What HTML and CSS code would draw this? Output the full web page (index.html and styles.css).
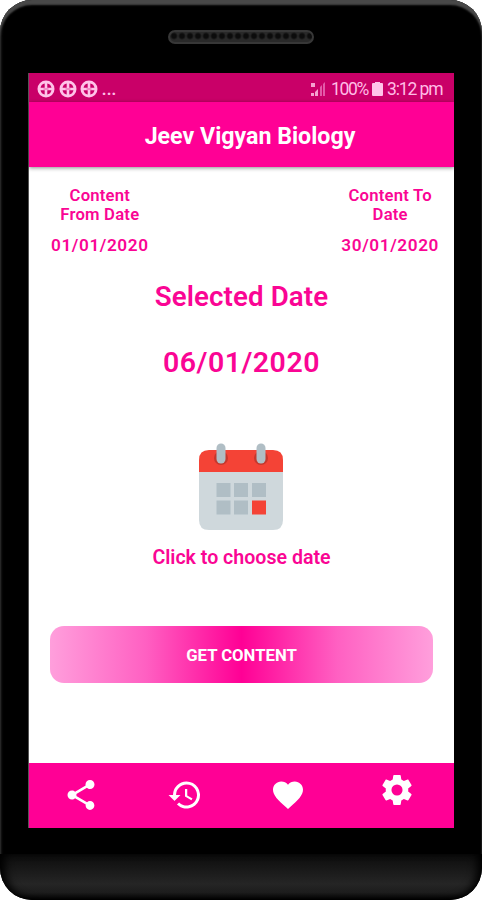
FILE: index.html
```html
<!DOCTYPE html>
<html lang="en">
<head>
    <meta charset="UTF-8">
    <meta name="viewport" content="width=device-width, initial-scale=1.0">
    <title>Jeev Vigyan Biology</title>
    <link rel="stylesheet" href="styles.css">
</head>
<body>

    <div class="phone">
        <div class="phone-top">
            <div class="speaker"></div>
        </div>

        <div class="screen">
            <div class="status-bar">
                <div class="notifications">
                    <svg class="ball" viewBox="0 0 18 18"><use href="#ball"/></svg>
                    <svg class="ball" viewBox="0 0 18 18"><use href="#ball"/></svg>
                    <svg class="ball" viewBox="0 0 18 18"><use href="#ball"/></svg>
                    <span class="dots">...</span>
                </div>
                <div class="status">
                    <svg class="signal" viewBox="0 0 15 15">
                        <path d="M0 1h4v4H0zM0 11h3v3H0zM4 10l3-3v7H4z" fill="#f5a3d1"/>
                        <path d="M9 5l2-2v11H9zM12 2l2-2v14h-2z" fill="#e35aa8"/>
                    </svg>
                    <span class="percent">100%</span>
                    <svg class="battery" viewBox="0 0 11 15"><path d="M3 0h5v1h2q1 0 1 1v11q0 1-1 1H1q-1 0-1-1V2q0-1 1-1h2z" fill="#ffc4e9"/></svg>
                    <span class="time">3:12 pm</span>
                </div>
            </div>

            <header class="app-bar">
                <h1>Jeev Vigyan Biology</h1>
            </header>

            <main class="content">
                <div class="range">
                    <div class="range-item">
                        <div class="label">Content<br>From Date</div>
                        <div class="value">01/01/2020</div>
                    </div>
                    <div class="range-item">
                        <div class="label">Content To<br>Date</div>
                        <div class="value">30/01/2020</div>
                    </div>
                </div>

                <h2 class="selected-title">Selected Date</h2>
                <div class="selected-date">06/01/2020</div>

                <svg class="calendar" viewBox="0 0 86 88">
                    <path d="M1 26h84v51q0 10-10 10H11Q1 87 1 77z" fill="#cfd8dc"/>
                    <path d="M1 29V17Q1 7 11 7h64q10 0 10 10v12z" fill="#f44336"/>
                    <circle cx="23" cy="15" r="7" fill="#c4382e"/>
                    <circle cx="63" cy="15" r="7" fill="#c4382e"/>
                    <rect x="18.5" y="0.5" width="9" height="20" rx="4.5" fill="#b0bec5"/>
                    <rect x="58.5" y="0.5" width="9" height="20" rx="4.5" fill="#b0bec5"/>
                    <path d="M18.500 40h14v14h-14zM36 40h14v14H36zM54 40h14v14H54zM18.500 57.500h14v14h-14zM36 57.500h14v14H36z" fill="#b0bec5"/>
                    <path d="M54 57.500h14v14H54z" fill="#f44336"/>
                </svg>
                <div class="choose">Click to choose date</div>

                <button class="get-content">GET CONTENT</button>
            </main>

            <nav class="bottom-nav">
                <a class="nav-item"><svg viewBox="0 0 24 24"><path d="M18 16.080c-.76 0-1.440.3-1.960.77L8.910 12.700c.05-.23.09-.46.09-.7s-.04-.47-.09-.7l7.050-4.110c.54.5 1.250.81 2.040.81 1.660 0 3-1.340 3-3s-1.340-3-3-3-3 1.340-3 3c0 .24.04.47.09.7L8.040 9.810C7.500 9.310 6.790 9 6 9c-1.660 0-3 1.340-3 3s1.340 3 3 3c.79 0 1.500-.31 2.040-.81l7.120 4.160c-.05.21-.08.43-.08.65 0 1.610 1.310 2.920 2.920 2.920s2.920-1.310 2.920-2.920-1.310-2.920-2.920-2.920z"/></svg></a>
                <a class="nav-item"><svg viewBox="0 0 24 24"><path d="M13 3a9 9 0 0 0-9 9H1l3.890 3.890.07.14L9 12H6a7 7 0 1 1 2.060 4.940l-1.420 1.420A9 9 0 1 0 13 3zm-1 5v5l4.280 2.540.72-1.210-3.500-2.080V8z"/></svg></a>
                <a class="nav-item"><svg viewBox="0 0 24 24"><path d="M12 21.350l-1.450-1.320C5.400 15.360 2 12.280 2 8.500 2 5.420 4.420 3 7.500 3c1.740 0 3.410.81 4.500 2.090C13.090 3.810 14.760 3 16.500 3 19.580 3 22 5.420 22 8.500c0 3.780-3.400 6.860-8.550 11.540z"/></svg></a>
                <a class="nav-item settings"><svg viewBox="0 0 24 24"><path d="M19.430 12.980c.04-.32.07-.64.07-.98s-.03-.66-.07-.98l2.110-1.650c.19-.15.24-.42.12-.64l-2-3.460c-.12-.22-.39-.3-.61-.22l-2.490 1c-.52-.4-1.080-.73-1.690-.98l-.38-2.650A.49.49 0 0 0 14 2h-4c-.25 0-.46.18-.49.42l-.38 2.650c-.61.25-1.170.59-1.690.98l-2.490-1c-.23-.09-.49 0-.61.22l-2 3.460c-.13.22-.07.49.12.64l2.110 1.650c-.04.32-.07.65-.07.98s.03.66.07.98l-2.110 1.650c-.19.15-.24.42-.12.64l2 3.460c.12.22.39.3.61.22l2.490-1c.52.4 1.080.73 1.690.98l.38 2.650c.03.24.24.42.49.42h4c.25 0 .46-.18.49-.42l.38-2.650c.61-.25 1.170-.59 1.690-.98l2.490 1c.23.09.49 0 .61-.22l2-3.460c.12-.22.07-.49-.12-.64zM12 15.700a3.700 3.700 0 1 1 0-7.400 3.700 3.700 0 0 1 0 7.400z"/></svg></a>
            </nav>
        </div>

        <div class="phone-bottom"></div>
    </div>

    <svg class="defs">
        <symbol id="ball" viewBox="0 0 18 18">
            <circle cx="9" cy="9" r="8.500" fill="#ffc4e9"/>
            <path d="M4.500 7q.5-2 2.500-2.500v2.500zM13.500 7q-.5-2-2.500-2.500v2.500zM4.500 11q.5 2 2.500 2.500v-2.500zM13.500 11q-.5 2-2.500 2.500v-2.500z" fill="#c90068" stroke="#c90068" stroke-width="1.400"/>
            <path d="M6.500 9h5" stroke="#e35aa8" stroke-width="1"/>
        </symbol>
    </svg>

</body>
</html>
```
FILE: styles.css
```css
* {
    box-sizing: border-box;
}

body {
    margin: 0;
    background: #ffffff;
    font-family: Roboto, 'Liberation Sans', sans-serif;
    color: #fa0594;
    overflow: hidden;
}

.defs {
    display: none;
}

svg {
    display: block;
    flex: none;
}

.phone {
    width: 482px;
    height: 900px;
    display: flex;
    flex-direction: column;
    background: #000000;
    border-radius: 32px;
    overflow: hidden;
    box-shadow: inset 0 5px 2px #484848, inset 1px 2px 3px #2a2a2a;
}

.phone-top {
    height: 73px;
    padding-top: 30px;
    flex: none;
}

.speaker {
    width: 146px;
    height: 14px;
    margin: 0 auto;
    border: 2px solid #373737;
    border-radius: 7px;
    background: radial-gradient(circle at 4px 4px, #0c0c0c 2px, #292929 4px) 0 0 / 8px 10px;
}

.screen {
    width: 426px;
    height: 755px;
    margin-left: 28px;
    border-left: 1px solid #555555;
    display: flex;
    flex-direction: column;
    flex: none;
    background: #ffffff;
}

.status-bar {
    height: 29px;
    padding: 3px 11px 0 8px;
    display: flex;
    justify-content: space-between;
    align-items: center;
    background: #c90068;
    color: #ffbde5;
    flex: none;
}

.notifications, .status {
    display: flex;
    align-items: center;
}

.ball {
    width: 18px;
    height: 18px;
    margin-right: 3.5px;
}

.dots {
    font-size: 19px;
    line-height: 20px;
    font-weight: 500;
    letter-spacing: -0.4px;
}

.signal {
    width: 15px;
    height: 15px;
    margin-right: 5px;
}

.percent, .time {
    font-size: 17.5px;
    line-height: 24px;
    white-space: nowrap;
}

.percent {
    width: 38px;
    letter-spacing: -1.3px;
}

.time {
    width: 56px;
    letter-spacing: -1.1px;
}

.battery {
    width: 11px;
    height: 15px;
    margin: 0 4px 0 3px;
}

.app-bar {
    height: 65px;
    display: flex;
    align-items: center;
    justify-content: center;
    padding: 3px 0 0 17px;
    background: #ff0095;
    box-shadow: 0 1px 4px rgba(0, 0, 0, 0.45);
    flex: none;
}

.app-bar h1 {
    margin: 0;
    font-size: 23.2px;
    font-weight: 700;
    color: #ffffff;
}

.content {
    flex: 1;
    display: flex;
    flex-direction: column;
    align-items: center;
}

.range {
    width: 100%;
    padding: 19px 15px 0 22px;
    display: flex;
    justify-content: space-between;
}

.range-item {
    text-align: center;
    font-weight: 600;
}

.label {
    font-size: 16.7px;
    line-height: 19px;
    letter-spacing: 0.2px;
}

.value {
    margin-top: 11px;
    font-size: 17.2px;
    line-height: 20px;
    letter-spacing: 0.6px;
}

.selected-title {
    margin: 26px 0 0;
    font-size: 27.7px;
    line-height: 32px;
    font-weight: 600;
    letter-spacing: 0.1px;
}

.selected-date {
    margin-top: 33px;
    font-size: 28.5px;
    line-height: 34px;
    font-weight: 600;
    letter-spacing: 0.5px;
}

.calendar {
    width: 86px;
    height: 88px;
    margin-top: 63px;
    margin-right: 1px;
}

.choose {
    margin-top: 15px;
    font-size: 19.6px;
    line-height: 24px;
    font-weight: 600;
}

.get-content {
    width: 383px;
    height: 57px;
    margin-top: 56px;
    padding: 2px 0 0;
    border: none;
    border-radius: 14px;
    background: linear-gradient(to right, #ff9fdc, #ff60c2 25%, #ff0095, #ff60c2 75%, #ff9fdc);
    color: #ffffff;
    font-family: inherit;
    font-size: 16.7px;
    font-weight: 700;
}

.bottom-nav {
    height: 65px;
    display: flex;
    align-items: center;
    padding: 0 10px 2px 0;
    background: #ff0095;
    flex: none;
}

.nav-item {
    flex: 1;
    display: flex;
    justify-content: center;
}

.nav-item svg {
    width: 36px;
    height: 36px;
    fill: #ffffff;
}

.settings {
    padding-bottom: 10px;
}

.settings svg {
    margin-right: -10px;
}

.phone-bottom {
    height: 46px;
    margin-top: auto;
    flex: none;
    border-radius: 0 0 32px 32px;
    background: linear-gradient(#0c0c0c, #252525 65%, #1c1c1c 85%, #000000);
    box-shadow: inset 8px 0 8px -3px #000000, inset -8px 0 8px -3px #000000;
}
```
